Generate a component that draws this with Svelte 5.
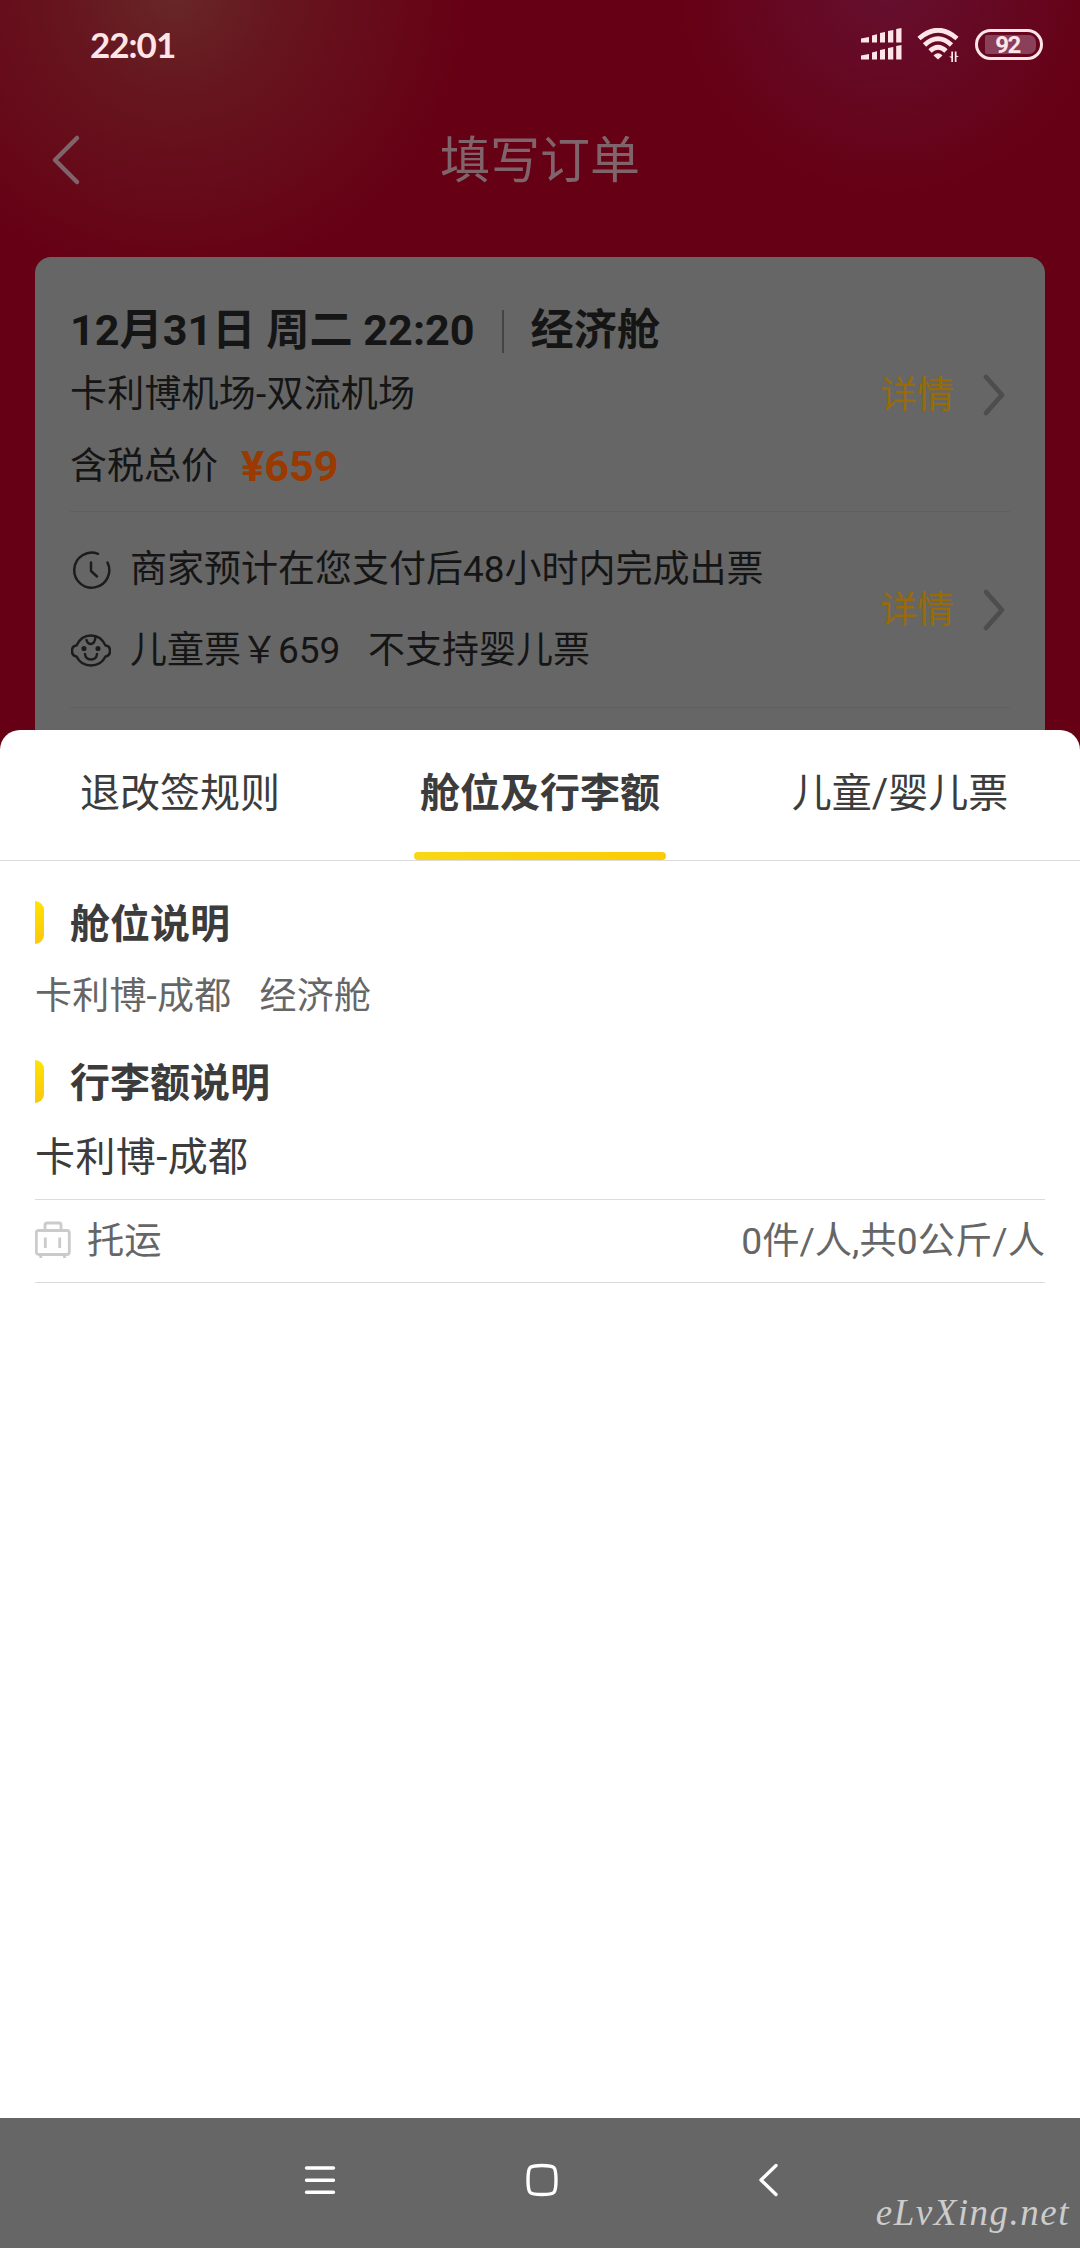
<script>
  let activeTab = $state(1);

  const tabs = ['退改签规则', '舱位及行李额', '儿童/婴儿票'];
  const flight = {
    date: '12月31日 周二 22:20',
    cabin: '经济舱',
    route: '卡利博机场-双流机场',
    price: 659
  };
  const baggage = { label: '托运', value: '0件/人,共0公斤/人' };
</script>

{#snippet detail()}
  <button class="detail">
    <span>详情</span>
    <svg width="24" height="44" viewBox="0 0 24 44">
      <path d="M4 4 L20 22 L4 40" />
    </svg>
  </button>
{/snippet}

<main>
  <div class="statusbar">
    <span class="time">22:01</span>
    <div class="indicators">
      <svg class="signal" width="41" height="32" viewBox="0 0 41 32">
        <g id="bars">
          <path d="M0 10.5 L8 9 V14.500 H0 Z M11 7.5 L16 6.200 V14.500 H11 Z M19 5 L24 4 V14.500 H19 Z M27 3 L32.300 2 V14.500 H27 Z M35.200 1 L40.500 0 V14.500 H35.200 Z" />
        </g>
        <use href="#bars" y="17" />
      </svg>
      <svg class="wifi" width="43" height="35" viewBox="0 0 43 35">
        <g class="arcs">
          <path d="M2 10.500 Q21 -6 40 10.500" />
          <path d="M7.500 17 Q21 4.500 34.500 17" />
          <path d="M13 23 Q21 15.500 29 23" />
        </g>
        <path d="M21 31.500 L16.500 27.500 Q21 23 25.500 27.500 Z" />
        <path d="M36 23.500 V34 H34.300 V30 L32 28.500 H34.300 V23.500 Z M37.800 34 V23.500 H39.500 V27.500 L42 29 H39.500 V34 Z" />
      </svg>
      <div class="battery"><span>92</span></div>
    </div>
  </div>

  <header>
    <svg class="back" width="30" height="52" viewBox="0 0 30 52">
      <path d="M26 4 L4 26 L26 48" />
    </svg>
    <h1>填写订单</h1>
  </header>

  <section class="card">
    <div class="flight">
      <div>
        <div class="when">
          {flight.date}<i></i>{flight.cabin}
        </div>
        <div class="route">{flight.route}</div>
        <div class="price">含税总价<b>¥{flight.price}</b></div>
      </div>
      {@render detail()}
    </div>
    <div class="notes">
      <div>
        <div class="note">
          <svg width="40" height="40" viewBox="0 0 40 40">
            <path d="M27 3.800 A17.500 17.500 0 1 0 36.500 12.500" />
            <path d="M20 12.500 V21 L26 26.500" />
          </svg>
          商家预计在您支付后48小时内完成出票
        </div>
        <div class="note">
          <svg width="40" height="40" viewBox="0 0 40 40">
            <path d="M5.500 14.500 C8.500 8 14 4.500 20 4.500 C26 4.500 31.500 8 34.500 14.500 C40.500 15 40.500 24.500 34.500 25.500 C31.500 31.500 26 34.500 20 34.500 C14 34.500 8.500 31.500 5.500 25.500 C-0.500 24.500 -0.500 15 5.500 14.500 Z" />
            <path d="M15.500 9 Q16.500 13 20 13 Q24 12.700 24.500 5.500 M14 23 Q14.500 28.500 20 28.500 Q25.500 28.500 26 23" />
            <circle cx="13" cy="17.500" r="1.300" />
            <circle cx="27" cy="17.500" r="1.300" />
          </svg>
          儿童票￥659&nbsp;&nbsp; 不支持婴儿票
        </div>
      </div>
      {@render detail()}
    </div>
  </section>

  <section class="sheet">
    <nav class="tabs">
      {#each tabs as tab, i}
        <button class:active={i === activeTab} onclick={() => (activeTab = i)}>{tab}</button>
      {/each}
    </nav>

    <div class="content">
      <h2>舱位说明</h2>
      <p class="cabin">卡利博-成都&nbsp;&nbsp; 经济舱</p>
      <h2>行李额说明</h2>
      <p class="leg">卡利博-成都</p>
      <div class="baggage">
        <svg width="36" height="37" viewBox="0 0 36 37">
          <rect x="1.300" y="9.500" width="33" height="24" rx="2.500" />
          <path d="M10 9.500 V4 Q10 2 12 2 H24 Q26 2 26 4 V9.500" />
          <path d="M10.300 16.500 V27 M24.700 16.500 V27" />
          <path d="M5.800 34 V37 M29.500 34 V37" />
        </svg>
        <span>{baggage.label}</span>
        <span class="amount">{baggage.value}</span>
      </div>
    </div>
  </section>

  <footer>
    <svg width="32" height="34" viewBox="0 0 32 34">
      <path d="M2.500 5 H29.500 M2.500 17.200 H29.500 M2.500 29.300 H29.500" />
    </svg>
    <svg class="home" width="34" height="34" viewBox="0 0 34 34">
      <path d="M17 2.500 C30 2.500 31 3.500 31 17 C31 30.500 30 31.500 17 31.500 C4 31.500 3 30.500 3 17 C3 3.500 4 2.500 17 2.500 Z" />
    </svg>
    <svg width="22" height="34" viewBox="0 0 22 34">
      <path d="M18 2.500 L3 17 L18 31.500" />
    </svg>
    <span class="watermark">eLvXing.net</span>
  </footer>
</main>

<style>
  :global(body) {
    margin: 0;
  }
  main {
    width: 1080px;
    height: 2248px;
    display: flex;
    flex-direction: column;
    overflow: hidden;
    font-family: Roboto, 'Noto Sans CJK SC', sans-serif;
    background:
      radial-gradient(circle at 175px -10px, #682828 0, rgba(102, 28, 34, 0.8) 100px, rgba(102, 0, 20, 0) 300px),
      radial-gradient(circle at 890px -20px, #651030 0, rgba(102, 0, 20, 0) 220px),
      #660014;
  }
  button {
    padding: 0;
    border: 0;
    background: none;
    font: inherit;
    color: inherit;
  }
  svg {
    flex: none;
    fill: none;
    stroke-linecap: round;
    stroke-linejoin: round;
  }
  .statusbar {
    height: 88px;
    padding: 0 37px 0 90px;
    box-sizing: border-box;
    display: flex;
    align-items: center;
    justify-content: space-between;
    color: #ffe4e8;
  }
  .time {
    font: 700 35px/88px Lato, sans-serif;
    letter-spacing: -1px;
  }
  .indicators {
    display: flex;
    align-items: center;
  }
  .signal {
    fill: #ffe4e8;
    margin-right: 15px;
  }
  .wifi {
    fill: #ffe4e8;
    margin: 3px 15px 0 0;
  }
  .arcs {
    fill: none;
    stroke: #ffe4e8;
    stroke-width: 4.8;
    stroke-linecap: butt;
  }
  .battery {
    width: 68px;
    height: 31px;
    box-sizing: border-box;
    border: 3px solid #ffe4e8;
    border-radius: 16px;
    padding: 3px 4px 3px 7px;
  }
  .battery span {
    display: block;
    height: 19px;
    border-radius: 2px 7px 7px 2px;
    background: #8b405a;
    font: 700 24px/20px Roboto, sans-serif;
    letter-spacing: -1.6px;
    text-indent: -6px;
    text-align: center;
  }
  header {
    height: 143px;
    margin-bottom: 26px;
    display: grid;
    grid-template-columns: 80px 1fr 80px;
    align-items: center;
    color: #80646c;
  }
  .back {
    margin-left: 51px;
    stroke: #80646c;
    stroke-width: 4.5;
  }
  h1 {
    margin: 3px 0 0;
    font-size: 50px;
    font-weight: 400;
    line-height: 80px;
    text-align: center;
  }
  .card {
    height: 473px;
    margin: 0 35px;
    padding: 43px 35px 0;
    box-sizing: border-box;
    border-radius: 16px 16px 0 0;
    background: #666;
    color: #151515;
    font-size: 37px;
  }
  .flight,
  .notes {
    display: flex;
    justify-content: space-between;
    border-bottom: 1px solid #5f5f5f;
  }
  .flight {
    padding-bottom: 6px;
  }
  .when {
    display: flex;
    align-items: center;
    font-size: 43.2px;
    font-weight: 700;
    line-height: 62px;
  }
  .when i {
    width: 2px;
    height: 43px;
    margin: 0 27px;
    background: #444;
  }
  .route {
    line-height: 66px;
    letter-spacing: 0.2px;
  }
  .price {
    display: flex;
    line-height: 77px;
  }
  .price b {
    margin-left: 23px;
    font-size: 43.2px;
    color: #9a3900;
  }
  .detail {
    display: flex;
    align-items: center;
    gap: 28px;
    height: 60px;
    margin-right: 4px;
    line-height: 60px;
    color: #996a08;
  }
  .detail span {
    padding-top: 1px;
  }
  .detail svg {
    stroke: #4d4d4d;
    stroke-width: 4.8;
  }
  .flight .detail {
    margin-top: 65px;
  }
  .notes {
    align-items: center;
    padding: 17px 0 16px;
  }
  .note {
    display: flex;
    align-items: center;
    gap: 19px;
    line-height: 81px;
  }
  .note svg {
    margin-left: 1px;
    stroke: #1c1c1c;
    stroke-width: 2.5;
  }
  .note circle {
    fill: #1c1c1c;
  }
  .sheet {
    flex: 1;
    border-radius: 20px 20px 0 0;
    background: #fff;
    color: #3c3c3c;
    font-size: 40px;
  }
  .tabs {
    display: grid;
    grid-template-columns: repeat(3, 1fr);
    justify-items: center;
    height: 130px;
    border-bottom: 1px solid #dcdcdc;
  }
  .tabs button {
    position: relative;
    padding-bottom: 2px;
    line-height: 128px;
  }
  .tabs .active {
    font-weight: 700;
  }
  .tabs .active::after {
    content: '';
    position: absolute;
    left: -6px;
    right: -6px;
    bottom: 0;
    height: 8px;
    border-radius: 4px;
    background: linear-gradient(90deg, #f8d714, #fbcb06);
  }
  .content {
    padding: 32px 35px 0;
  }
  h2 {
    display: flex;
    align-items: center;
    gap: 26px;
    margin: 0;
    font-size: 40px;
    line-height: 64px;
  }
  h2::before {
    content: '';
    width: 9px;
    height: 43px;
    margin-bottom: 5px;
    border-radius: 0 9px 9px 0;
    background: linear-gradient(160deg, #ffe400, #fbc60e);
  }
  p {
    margin: 0;
  }
  .cabin {
    margin-bottom: 15px;
    font-size: 37px;
    letter-spacing: 0.2px;
    line-height: 80px;
    color: #666;
  }
  .leg {
    line-height: 83px;
    letter-spacing: 0.4px;
    border-bottom: 1px solid #dcdcdc;
  }
  .baggage {
    display: flex;
    align-items: center;
    height: 82px;
    border-bottom: 1px solid #dcdcdc;
    font-size: 37.3px;
    line-height: 76px;
    color: #666;
  }
  .baggage svg {
    margin: 0 16px 3px 0;
    stroke: #cbcbcb;
    stroke-width: 2.8;
    stroke-linecap: butt;
  }
  .baggage span {
    padding-bottom: 1px;
  }
  .amount {
    margin-left: auto;
  }
  footer {
    position: relative;
    height: 130px;
    padding: 0 300px 6px 304px;
    box-sizing: border-box;
    display: flex;
    align-items: center;
    justify-content: space-between;
    background: #666;
  }
  footer svg {
    stroke: #fff;
    stroke-width: 3.4;
  }
  .home {
    margin-right: 10px;
  }
  .watermark {
    position: absolute;
    right: 10px;
    bottom: 12px;
    font: italic 37px/46px 'Liberation Serif', serif;
    letter-spacing: 1.5px;
    color: #ccc;
  }
</style>
